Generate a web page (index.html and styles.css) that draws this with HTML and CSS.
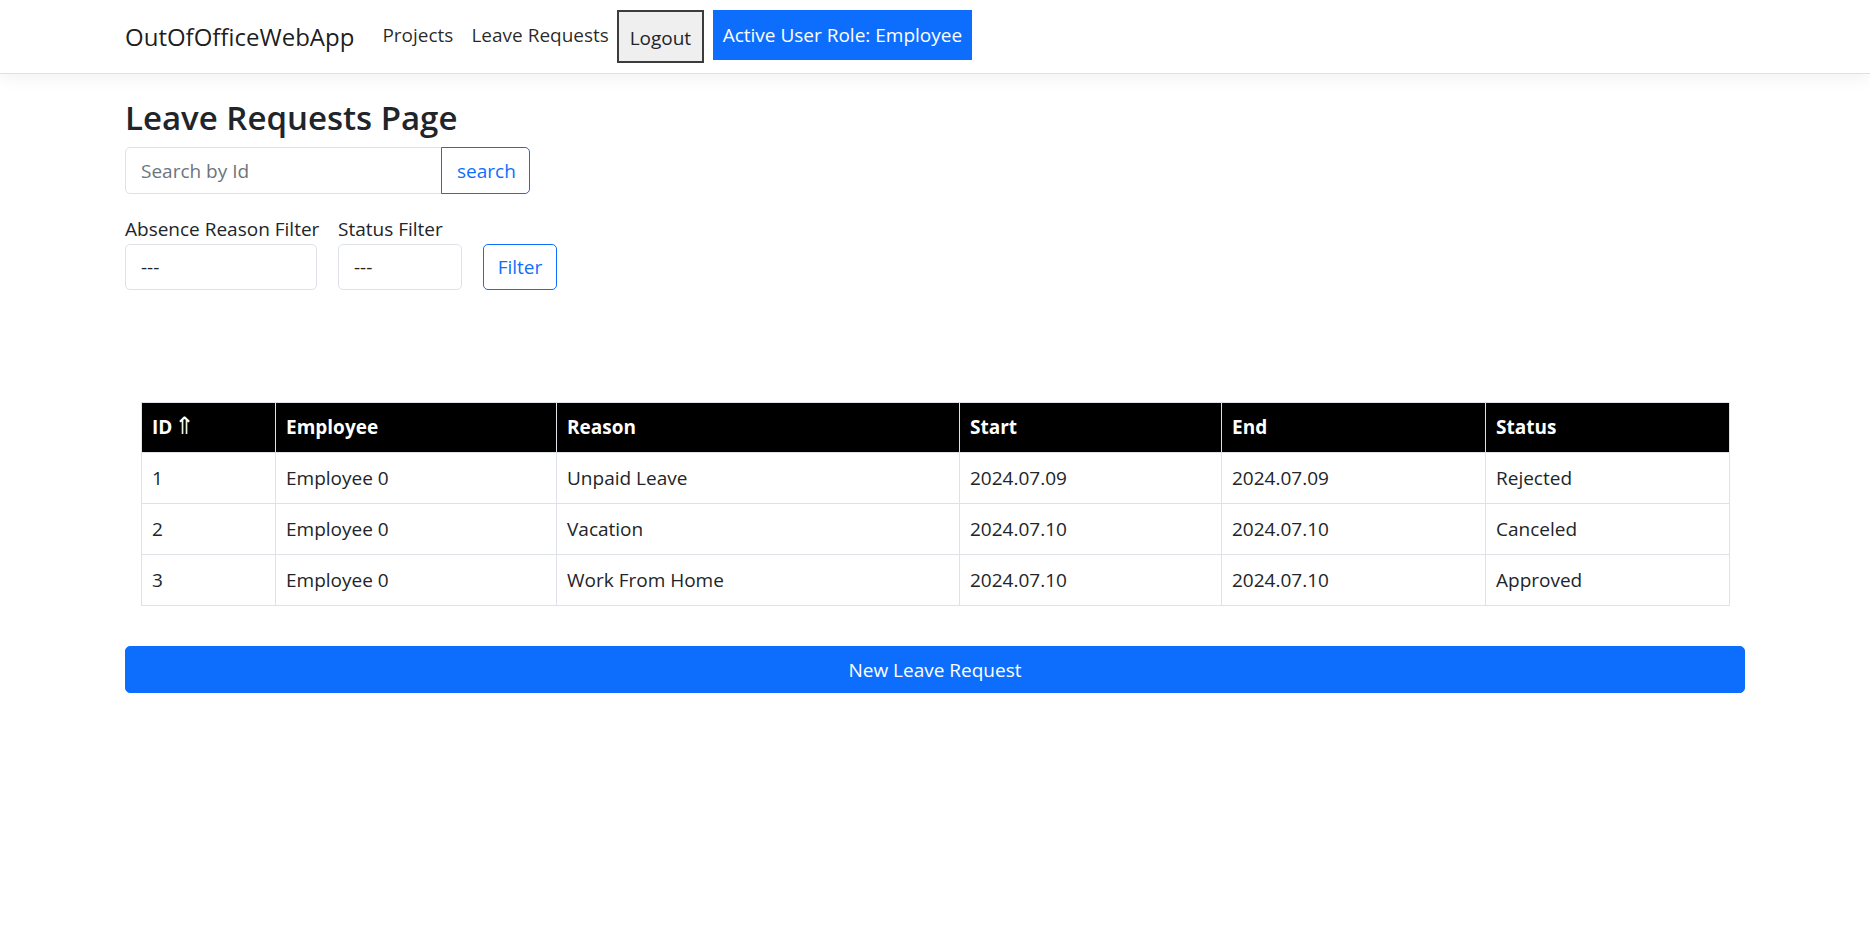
FILE: index.html
```html
<!DOCTYPE html>
<html lang="en">
<head>
<meta charset="utf-8">
<title>Leave Requests Page - OutOfOfficeWebApp</title>
<link rel="stylesheet" href="styles.css">
</head>
<body>
<header class="navbar">
  <div class="container nav-inner">
    <a class="brand" href="#">OutOfOfficeWebApp</a>
    <nav class="nav-links">
      <a class="nav-link" href="#">Projects</a>
      <a class="nav-link" href="#">Leave Requests</a>
      <button class="logout" type="button">Logout</button>
      <span class="role">Active User Role: Employee</span>
    </nav>
  </div>
</header>
<main class="container main">
  <h2 class="title">Leave Requests Page</h2>
  <div class="search-group">
    <input class="search-input" type="text" placeholder="Search by Id">
    <button class="btn-outline search-btn" type="button">search</button>
  </div>
  <div class="filters">
    <div class="field field-reason">
      <label class="label">Absence Reason Filter</label>
      <div class="select">---</div>
    </div>
    <div class="field field-status">
      <label class="label">Status Filter</label>
      <div class="select">---</div>
    </div>
    <button class="btn-outline filter-btn" type="button">Filter</button>
  </div>
  <div class="table-wrap">
    <table class="table">
      <colgroup>
        <col class="c-id"><col class="c-emp"><col class="c-reason"><col class="c-start"><col class="c-end"><col class="c-status">
      </colgroup>
      <thead>
        <tr><th>ID <span class="arrow">⇑</span></th><th>Employee</th><th>Reason</th><th>Start</th><th>End</th><th>Status</th></tr>
      </thead>
      <tbody>
        <tr><td>1</td><td>Employee 0</td><td>Unpaid Leave</td><td>2024.07.09</td><td>2024.07.09</td><td>Rejected</td></tr>
        <tr><td>2</td><td>Employee 0</td><td>Vacation</td><td>2024.07.10</td><td>2024.07.10</td><td>Canceled</td></tr>
        <tr><td>3</td><td>Employee 0</td><td>Work From Home</td><td>2024.07.10</td><td>2024.07.10</td><td>Approved</td></tr>
      </tbody>
    </table>
  </div>
  <button class="btn-primary new-btn" type="button">New Leave Request</button>
</main>
</body>
</html>
```
FILE: styles.css
```css
* { box-sizing: border-box; }
html, body { margin: 0; padding: 0; }
body {
  font-family: "Open Sans", "Noto Sans", "Liberation Sans", sans-serif;
  font-size: 20px;
  line-height: 1.5;
  color: #212529;
  background: #fff;
}
.container {
  padding: 0 125px;
}
.navbar {
  border-bottom: 1px solid #dee2e6;
  box-shadow: 0 5px 15px rgba(0,0,0,.05);
  padding: 10px 0;
}
.nav-inner {
  display: flex;
  align-items: center;
  height: 53px;
}
.brand {
  font-size: 24px;
  color: rgba(0,0,0,.9);
  text-decoration: none;
  margin-right: 19px;
  line-height: 1;
}
.nav-links {
  display: flex;
  align-items: flex-start;
  height: 53px;
}
.nav-link {
  color: rgba(0,0,0,.85);
  text-decoration: none;
  padding: 10px 9px 0;
  font-size: 19px;
  line-height: 30px;
}
.logout {
  font-family: inherit;
  font-size: 19px;
  color: #212529;
  background: #efefef;
  border: 2px solid #3c3c3c;
  height: 53px;
  width: 87px;
  padding: 0;
  margin-left: -1px;
  margin-right: 9px;
  line-height: 1;
  padding-top: 4px;
}
.role {
  background: #0d6efd;
  color: #fff;
  height: 50px;
  width: 259px;
  display: flex;
  align-items: center;
  justify-content: center;
  font-size: 19px;
}
.main {
  padding-top: 20px;
}
.title {
  font-size: 33px;
  font-weight: 600;
  line-height: 48px;
  margin: 0 0 5px;
}
.search-group {
  display: flex;
  height: 47px;
}
.search-input {
  width: 317px;
  height: 47px;
  border: 1px solid #dee2e6;
  border-radius: 5px 0 0 5px;
  padding: 0 15px;
  font-family: inherit;
  font-size: 19px;
  color: #212529;
  outline: none;
}
.search-input::placeholder { color: #6c757d; }
.btn-outline {
  font-family: inherit;
  font-size: 19px;
  color: #0d6efd;
  background: #fff;
  border: 1px solid #0d6efd;
  border-radius: 5px;
  height: 47px;
  padding: 0 15px;
}
.search-btn {
  width: 89px;
  border-radius: 0 5px 5px 0;
  margin-left: -1px;
}
.filters {
  display: flex;
  align-items: flex-end;
  gap: 21px;
  margin-top: 20px;
}
.field {
  display: flex;
  flex-direction: column;
}
.field-reason { width: 192px; }
.field-status { width: 124px; }
.label {
  font-size: 19px;
  line-height: 30px;
  white-space: nowrap;
}
.select {
  height: 46px;
  border: 1px solid #dee2e6;
  border-radius: 5px;
  padding: 0 15px;
  display: flex;
  align-items: center;
  font-size: 19px;
}
.filter-btn {
  width: 74px;
  height: 46px;
  padding: 0;
}
.table-wrap {
  padding: 0 16px;
  margin-top: 112px;
}
.table {
  width: 1588px;
  border-collapse: collapse;
  table-layout: fixed;
}
.c-id { width: 134px; }
.c-emp { width: 281px; }
.c-reason { width: 403px; }
.c-start { width: 262px; }
.c-end { width: 264px; }
.c-status { width: 244px; }
.table th, .table td {
  border: 1px solid #dee2e6;
  padding: 10px 10px;
  text-align: left;
  font-size: 19px;
  vertical-align: middle;
}
.table th {
  background: #000;
  color: #fff;
  font-weight: 700;
  line-height: 29px;
  height: 50px;
}
.table td {
  line-height: 30px;
  height: 51px;
}
.arrow {
  font-family: "DejaVu Sans", sans-serif;
  font-weight: 400;
  font-size: 24px;
  color: #fff;
  line-height: 1;
  margin-left: -3px;
}
.btn-primary {
  display: block;
  width: 100%;
  height: 47px;
  margin-top: 40px;
  background: #0d6efd;
  color: #fff;
  border: 1px solid #0d6efd;
  border-radius: 5px;
  font-family: inherit;
  font-size: 19px;
}
```
